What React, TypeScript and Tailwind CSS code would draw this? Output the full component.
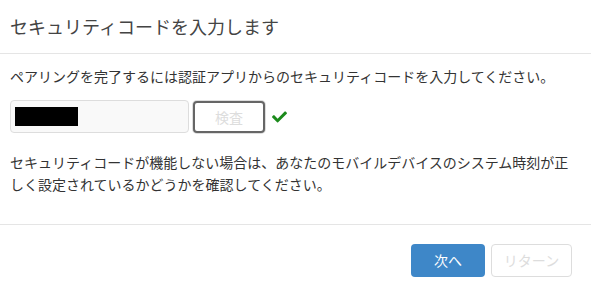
const font = { fontFamily: '"Noto Sans CJK JP", "Noto Sans", sans-serif' };

const App = () => {
  return (
    <div className="w-[591px] h-[295px] bg-white text-[#333]" style={font}>
      <div className="h-[54px] border-b border-[#e5e5e5] px-[10px] flex items-center text-[18px] text-[#444]">
        セキュリティコードを入力します
      </div>
      <div className="px-[10px] pt-[11px] pb-[29px] border-b border-[#e5e5e5] text-[14px] leading-[22px]">
        <p>ペアリングを完了するには認証アプリからのセキュリティコードを入力してください。</p>
        <div className="mt-[13px] flex items-center">
          <div className="w-[179px] h-[33px] bg-[#f9f9f9] border border-[#ddd] rounded-[4px] flex items-center px-[4px]">
            <div className="w-[63px] h-[19px] bg-black" />
          </div>
          <button className="ml-[4px] w-[72px] h-[32px] rounded-[4px] border-2 border-[#666] shadow-[0_0_0_1px_#ddd] text-[#ddd] text-[14px] bg-white">
            検査
          </button>
          <svg className="ml-[7px]" width="15" height="13" viewBox="0 0 512 420">
            <path
              fill="#1b8a1b"
              d="M173.9 410.3 7.5 243.9c-10-10-10-26.2 0-36.2l36.2-36.2c10-10 26.2-10 36.2 0L192 283.6 432.1 43.5c10-10 26.2-10 36.2 0l36.2 36.2c10 10 10 26.2 0 36.2L210.1 410.3c-10 10-26.2 10-36.2 0z"
            />
          </svg>
        </div>
        <p className="mt-[18px]">
          セキュリティコードが機能しない場合は、あなたのモバイルデバイスのシステム時刻が正しく設定されているかどうかを確認してください。
        </p>
      </div>
      <div className="flex justify-end gap-[6px] pt-[19px] pr-[19px]">
        <button className="w-[74px] h-[33px] rounded-[4px] bg-[#3e87c8] text-white text-[14px]">次へ</button>
        <button className="w-[81px] h-[33px] rounded-[4px] border border-[#ddd] bg-white text-[#ddd] text-[14px]">
          リターン
        </button>
      </div>
    </div>
  );
};

export default App;
